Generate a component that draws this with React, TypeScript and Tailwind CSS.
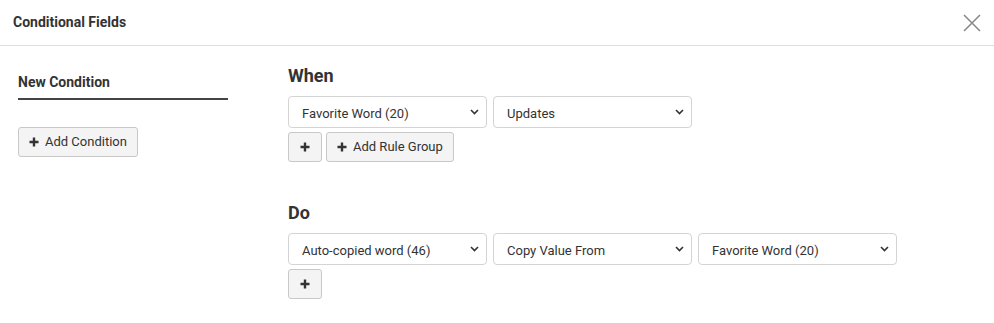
import React from 'react';

const font = { fontFamily: 'Roboto, "Liberation Sans", sans-serif' };

const PlusIcon = () => (
  <svg width="10" height="10" viewBox="0 0 10 10" className="shrink-0">
    <path d="M5 0.5v9M0.5 5h9" stroke="#333" strokeWidth="2.4" />
  </svg>
);

const Chevron = () => (
  <svg width="9" height="6" viewBox="0 0 9 6" className="pointer-events-none absolute right-[8px] top-1/2 -translate-y-1/2">
    <path d="M1 1l3.5 3.5L8 1" stroke="#333" strokeWidth="1.6" fill="none" />
  </svg>
);

const Select = ({ value }: { value: string }) => (
  <div className="relative w-[199px]">
    <select
      defaultValue={value}
      className="h-[32px] w-full appearance-none rounded-[4px] border border-[#d4d4d4] bg-white pl-[13px] pr-6 pt-[3px] text-[13px] text-[#333] outline-none"
      style={font}
    >
      <option>{value}</option>
    </select>
    <Chevron />
  </div>
);

const Btn = ({ label }: { label?: string }) => (
  <button
    className={
      label
        ? 'flex h-[30px] items-center gap-[6px] rounded-[3px] border border-[#c8c8c8] bg-[#f4f4f4] px-[10px] text-[13px] text-[#333]'
        : 'flex h-[30px] w-[34px] items-center justify-center rounded-[3px] border border-[#c8c8c8] bg-[#f4f4f4] text-[13px] text-[#333]'
    }
    style={font}
  >
    <PlusIcon />
    {label && <span>{label}</span>}
  </button>
);

export default function App() {
  return (
    <div className="h-[323px] w-[994px] bg-white text-[#333]" style={font}>
      <div className="flex h-[46px] items-center justify-between border-b border-[#dedede] pl-[13px] pr-[13px]">
        <span className="text-[14px] font-bold">Conditional Fields</span>
        <svg width="18" height="18" viewBox="0 0 18 18">
          <path d="M1 1l16 16M17 1L1 17" stroke="#8a8a8a" strokeWidth="1.6" />
        </svg>
      </div>
      <div className="flex">
        <div className="ml-[18px] w-[210px] pt-[26px]">
          <div className="border-b-2 border-[#444] pb-[6px] text-[14px] font-bold leading-[20px]">New Condition</div>
          <div className="mt-[27px]">
            <Btn label="Add Condition" />
          </div>
        </div>
        <div className="ml-[60px] pt-[18px]">
          <h2 className="text-[18px] font-bold leading-[24px]">When</h2>
          <div className="mt-[8px] flex gap-[6px]">
            <Select value="Favorite Word (20)" />
            <Select value="Updates" />
          </div>
          <div className="mt-[4px] flex gap-[4px]">
            <Btn />
            <Btn label="Add Rule Group" />
          </div>
          <h2 className="mt-[39px] text-[18px] font-bold leading-[24px]">Do</h2>
          <div className="mt-[8px] flex gap-[6px]">
            <Select value="Auto-copied word (46)" />
            <Select value="Copy Value From" />
            <Select value="Favorite Word (20)" />
          </div>
          <div className="mt-[4px] flex">
            <Btn />
          </div>
        </div>
      </div>
    </div>
  );
}
